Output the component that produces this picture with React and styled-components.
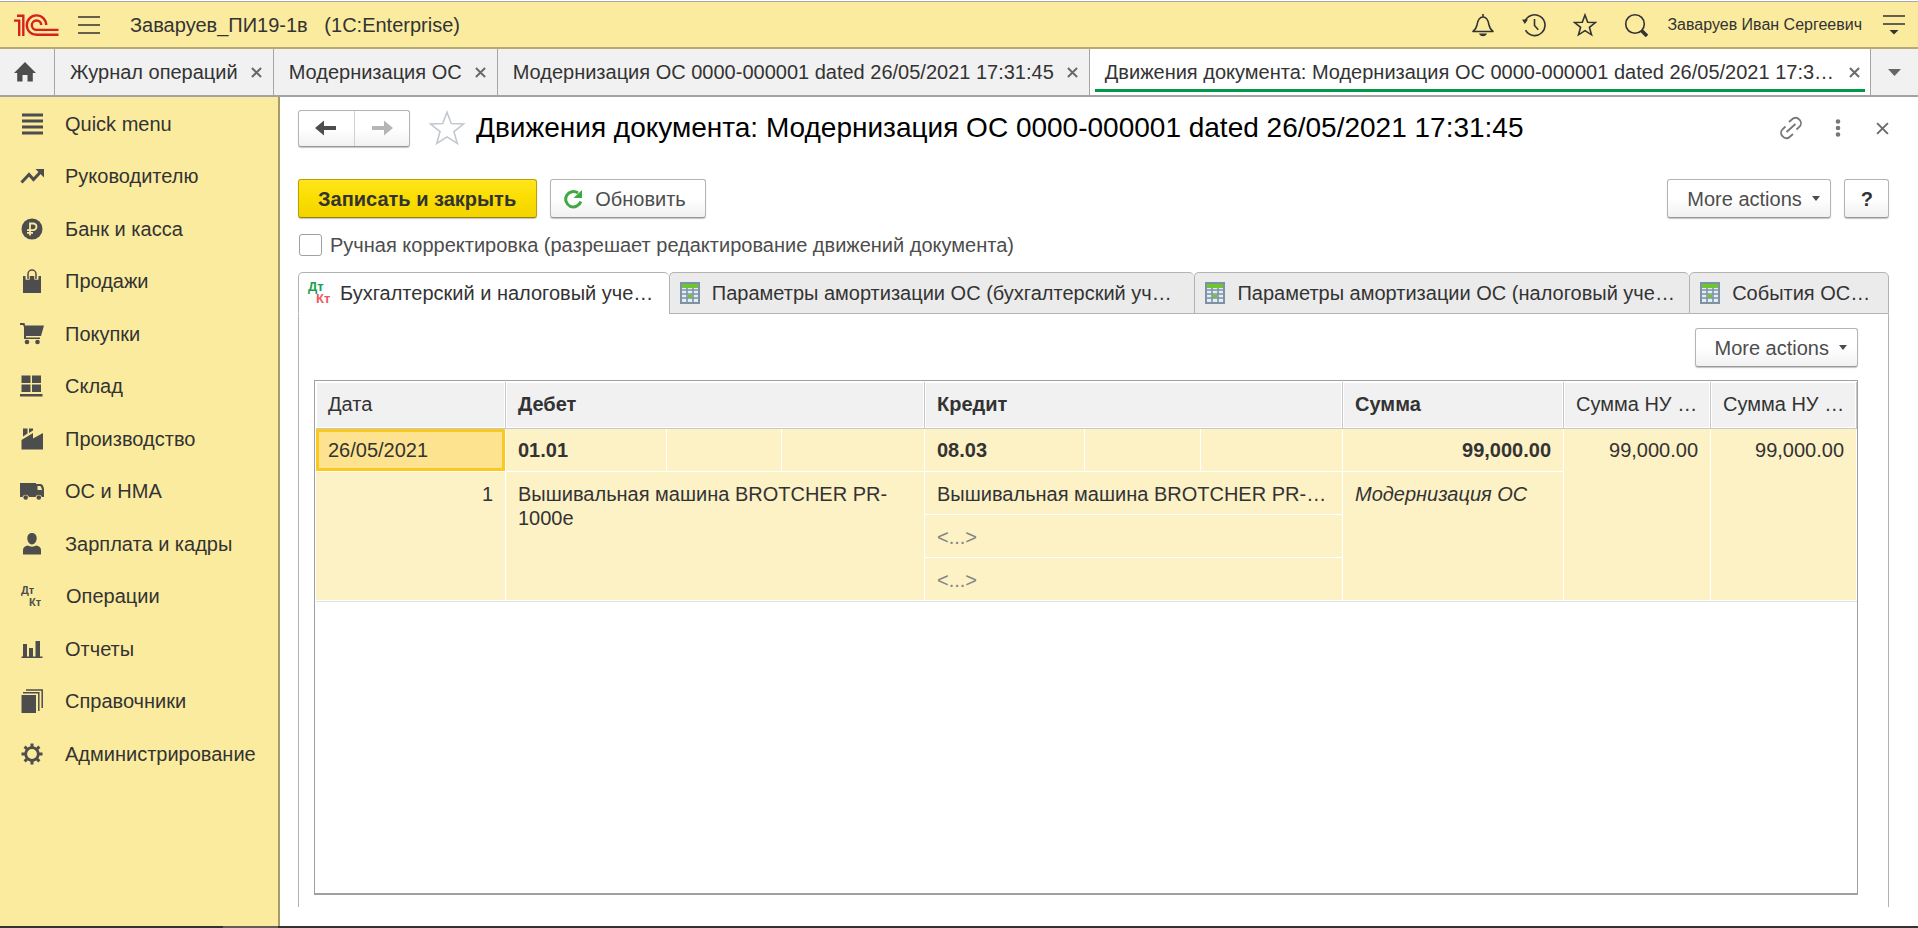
import React from "react";
import styled, { createGlobalStyle, css } from "styled-components";

const GlobalStyle = createGlobalStyle`
  *, *::before, *::after { box-sizing: border-box; }
  body {
    margin: 0;
    background: #ffffff;
    color: #333333;
    font: 20px/24px "Liberation Sans", Arial, sans-serif;
  }
  button, input { font: inherit; color: inherit; }
  svg { display: block; flex: none; }
`;

const Page = styled.div`
  min-height: 100vh;
  display: flex;
  flex-direction: column;
`;

/* ---------- title bar ---------- */

const TitleBar = styled.header`
  flex: none;
  height: 48px;
  margin-top: 1px;
  padding: 0 0 0 14px;
  display: flex;
  align-items: center;
  background: #faeb9e;
  border-top: 1px solid #a8a8a8;
  border-bottom: 2px solid #b5aa72;
`;

const PlainButton = styled.button`
  flex: none;
  display: flex;
  align-items: center;
  justify-content: center;
  width: ${(p) => p.$w}px;
  height: ${(p) => p.$h || 40}px;
  padding: 0;
  border: 0;
  background: none;
  cursor: pointer;
`;

const AppTitle = styled.h1`
  flex: 1;
  min-width: 0;
  margin: 0 0 0 11px;
  font-size: 20px;
  font-weight: 400;
  line-height: 24px;
  white-space: pre;
  overflow: hidden;
`;

const TitleTools = styled.div`
  display: flex;
  align-items: center;
  gap: 11px;
`;

const UserLink = styled.a`
  margin: 0 8px 0 11px;
  font-size: 16px;
  line-height: 24px;
  color: #333333;
  text-decoration: none;
  white-space: nowrap;
`;

/* ---------- window tabs ---------- */

const WindowTabs = styled.nav`
  flex: none;
  display: flex;
  height: 48px;
  background: #f1f1f1;
  border-bottom: 2px solid #a3a3a3;
`;

const HomeTab = styled.button`
  flex: none;
  width: 55px;
  display: flex;
  align-items: center;
  justify-content: center;
  padding: 0 4px 0 0;
  border: 0;
  border-right: 1px solid #a6a6a6;
  background: none;
`;

const WindowTab = styled.div`
  position: relative;
  flex: ${(p) => (p.$active ? "1 1 0" : "none")};
  min-width: 0;
  display: flex;
  align-items: center;
  padding: 0 6px 0 15px;
  border-right: 1px solid #a6a6a6;
  background: ${(p) => (p.$active ? "#ffffff" : "none")};
  ${(p) =>
    p.$active &&
    css`
      &::after {
        content: "";
        position: absolute;
        left: 5px;
        right: 5px;
        bottom: 3px;
        height: 3px;
        background: #009a46;
      }
    `}
`;

const WindowTabLink = styled.a`
  flex: 1;
  min-width: 0;
  white-space: nowrap;
  color: #333333;
  text-decoration: none;
`;

const TabClose = styled(PlainButton)`
  margin-left: 9px;
`;

const TabsMenu = styled(PlainButton)`
  height: 46px;
`;

/* ---------- body ---------- */

const Body = styled.div`
  flex: 1;
  display: flex;
  min-height: 0;
`;

const Sidebar = styled.nav`
  flex: none;
  width: 280px;
  background: #fbeb9e;
  border-right: 2px solid #a79c66;
`;

const Menu = styled.ul`
  margin: 0;
  padding: 0;
  list-style: none;
`;

const MenuItem = styled.li`
  height: 53px;
  &:nth-child(even) { height: 52px; }
`;

const MenuLink = styled.a`
  height: 100%;
  display: flex;
  align-items: center;
  gap: 21px;
  padding-left: 20px;
  color: #333333;
  text-decoration: none;
  white-space: nowrap;
`;

const Main = styled.main`
  flex: 1;
  min-width: 0;
  display: flex;
  flex-direction: column;
  padding: 12px 29px 19px 18px;
`;

const FormHeader = styled.div`
  flex: none;
  display: flex;
  align-items: center;
  height: 38px;
`;

const FormTools = styled.div`
  display: flex;
  align-items: center;
  gap: 28px;
`;

const raised = css`
  border: 1px solid #b4b4b4;
  border-bottom-color: #989898;
  border-radius: 3px;
  background: linear-gradient(#ffffff 50%, #f1f1f1);
  box-shadow: 0 1px 1px #c4c4c4;
`;

const NavButtons = styled.div`
  ${raised}
  display: flex;
  width: 112px;
  height: 37px;
`;

const NavButton = styled.button`
  flex: 1;
  display: flex;
  align-items: center;
  justify-content: center;
  padding: 0;
  border: 0;
  background: none;
  & + & { border-left: 1px solid #d0d0d0; }
`;

const StarButton = styled(PlainButton)`
  margin-left: 18px;
`;

const FormTitle = styled.h2`
  flex: 1;
  min-width: 0;
  margin: 0 0 0 10px;
  font-size: 28px;
  font-weight: 400;
  line-height: 36px;
  color: #000000;
  white-space: nowrap;
  overflow: hidden;
`;

const Toolbar = styled.div`
  flex: none;
  display: flex;
  gap: 13px;
  margin-top: ${(p) => p.$top}px;
  justify-content: ${(p) => (p.$end ? "flex-end" : "flex-start")};
`;

const Spacer = styled.div`
  flex: 1;
`;

const Button = styled.button`
  ${raised}
  height: 39px;
  display: flex;
  align-items: center;
  padding: 0 ${(p) => p.$pr}px 0 ${(p) => p.$pl}px;
  gap: ${(p) => p.$gap || 0}px;
  color: #4d4d4d;
  white-space: nowrap;
  cursor: pointer;
  ${(p) =>
    p.$primary &&
    css`
      border-color: #b8a100;
      border-bottom-color: #958400;
      background: linear-gradient(#ffe61c, #fbdd00 50%, #f3d400);
      color: #333333;
      font-weight: 700;
    `}
  ${(p) => p.$bold && css`font-weight: 700; color: #333333;`}
`;

const CheckRow = styled.label`
  flex: none;
  align-self: flex-start;
  display: flex;
  align-items: center;
  gap: 8px;
  height: 24px;
  margin: 15px 0 0 1px;
  color: #4d4d4d;
`;

const CheckBox = styled.input`
  appearance: none;
  width: 23px;
  height: 22px;
  margin: 0;
  border: 1px solid #a0a0a0;
  border-radius: 3px;
  background: #ffffff;
`;

/* ---------- form tabs ---------- */

const FormTabs = styled.div`
  flex: none;
  display: grid;
  grid-template-columns: 371fr 526fr 495fr 200fr;
  height: 42px;
  margin-top: 15px;
`;

const FormTab = styled.button`
  min-width: 0;
  display: flex;
  align-items: center;
  gap: 8px;
  padding: 0 10px 0 8px;
  border: 1px solid #b3b3b3;
  border-right-width: 0;
  border-radius: 5px 5px 0 0;
  background: #ebebeb;
  text-align: left;
  &:last-child { border-right-width: 1px; }
  & + & { padding-left: 10px; gap: 12px; }
  ${(p) =>
    p.$active &&
    css`
      background: #ffffff;
      border-bottom-color: transparent;
    `}
`;

const FormTabText = styled.span`
  min-width: 0;
  overflow: hidden;
  white-space: nowrap;
`;

const Panel = styled.section`
  flex: 1;
  display: flex;
  flex-direction: column;
  padding: 14px 30px 12px 15px;
  border: 1px solid #b3b3b3;
  border-width: 0 1px;
`;

/* ---------- postings table ---------- */

const TableBox = styled.div`
  flex: 1;
  margin-top: 13px;
  padding: 1px 2px 24px 1px;
  border: 1px solid #a0a0a0;
  border-bottom-width: 2px;
`;

const Table = styled.table`
  width: 100%;
  table-layout: fixed;
  border-collapse: separate;
  border-spacing: 0;
  border-bottom: 1px solid #e2e2e2;
  tbody tr + tr td { padding-top: 10px; padding-bottom: 8px; }
`;

const Th = styled.th`
  height: 47px;
  padding: 0 8px 2px 12px;
  border-right: 1px solid #c8c8c8;
  border-bottom: 1px solid #c8c8c8;
  background: #f1f1f1;
  box-shadow: inset 0 0 0 1px #ffffff;
  font-weight: ${(p) => (p.$bold ? 700 : 400)};
  text-align: left;
  white-space: nowrap;
  overflow: hidden;
`;

const Td = styled.td`
  height: 43px;
  padding: 9px 12px;
  border-right: 1px solid #ffffff;
  border-bottom: 1px solid #ffffff;
  background: #fdf1c6;
  vertical-align: top;
  overflow: hidden;
  text-align: ${(p) => (p.$right ? "right" : "left")};
  white-space: ${(p) => (p.$wrap ? "normal" : "nowrap")};
  font-weight: ${(p) => (p.$bold ? 700 : 400)};
  font-style: ${(p) => (p.$italic ? "italic" : "normal")};
  color: ${(p) => (p.$muted ? "#858585" : "#333333")};
  ${(p) =>
    p.$selected &&
    css`
      background: #fde38f;
      box-shadow: inset 0 0 0 3px #fbc91e;
    `}
`;

const BottomEdge = styled.footer`
  flex: none;
  height: 2px;
  background: linear-gradient(#655c55, #655c55) 223px 0 / 55px 2px no-repeat #35332f;
`;

/* ---------- icons ---------- */

const ink = "#4d4d4d";

const Svg = ({ w = 24, h = 24, children, ...rest }) => (
  <svg width={w} height={h} viewBox={`0 0 ${w} ${h}`} fill="none" aria-hidden="true" {...rest}>
    {children}
  </svg>
);

const Logo = () => (
  <Svg w={45} h={24} stroke="#d8211f" strokeWidth="2.4">
    <path d="M3 2.7h6.3V23M0 7.6h5.2V23" />
    <path d="M32.2 12A9.7 9.7 0 1 0 22.6 21.8H44.5" />
    <path d="M27.2 12a4.7 4.7 0 1 0-4.6 4.9H44.5" />
  </Svg>
);

const Burger = () => (
  <Svg w={22} h={18} stroke="#333" strokeWidth="1.6">
    <path d="M0 1h22M0 9h22M0 17h22" />
  </Svg>
);

const Bell = () => (
  <Svg stroke="#333" strokeWidth="1.6" strokeLinejoin="round">
    <path d="M12 1v2.5M2 18.5h20c-2.500-1.800-3.400-3.300-4-6.500-.800-5-2.400-8-6-8s-5.200 3-6 8c-.600 3.200-1.500 4.700-4 6.500z" />
    <path d="M8 20.500h8c-.500 1.600-2 2.800-4 2.800s-3.500-1.200-4-2.800z" fill="#333" stroke="none" />
  </Svg>
);

const History = () => (
  <Svg stroke="#333" strokeWidth="1.600">
    <path d="M2.700 9A10.400 10.400 0 1 1 3.500 17.200M12.500 6v6.500l3.800 4.300" />
    <path d="M0 6.500h6L2.800 11z" fill="#333" stroke="none" />
  </Svg>
);

const Star = ({ size = 24, stroke = "#333", width = 1.6 }) => (
  <svg width={size} height={size} viewBox="0 0 24 24" fill="none" stroke={stroke} strokeWidth={width} aria-hidden="true">
    <path d="M12 2l2.700 7.200 7.700.300-6 4.800 2.100 7.500-6.500-4.200-6.500 4.200 2.100-7.500-6-4.800 7.700-.300z" />
  </svg>
);

const Search = () => (
  <Svg stroke="#333" strokeWidth="1.600">
    <circle cx="11" cy="11" r="9.300" />
    <path d="M17.500 17.500l5.500 5.500" strokeWidth="3.600" />
  </Svg>
);

const ServiceMenu = () => (
  <Svg w={22} h={20} stroke="#333" strokeWidth="1.600">
    <path d="M0 1h22M0 9h22" />
    <path d="M6.500 15h9L11 19.500z" fill="#333" stroke="none" />
  </Svg>
);

const House = () => (
  <Svg w={22} h={20} fill={ink}>
    <path d="M11 0L0 11h3.200v8.500h5.300V13h5v6.500h5.300V11H22z" fill={ink} />
  </Svg>
);

const Cross = ({ size = 12, color = "#6b6b6b", width = 2.2 }) => (
  <svg width={size} height={size} viewBox="0 0 12 12" stroke={color} strokeWidth={width} aria-hidden="true">
    <path d="M1 1l10 10M11 1L1 11" />
  </svg>
);

const Caret = ({ w = 8, h = 5, color = "#4d4d4d" }) => (
  <svg width={w} height={h} viewBox="0 0 8 5" preserveAspectRatio="none" aria-hidden="true">
    <path d="M0 0h8L4 5z" fill={color} />
  </svg>
);

const Arrow = ({ color, flip }) => (
  <Svg w={22} h={16}>
    <path
      d={flip ? "M22 8L13 .500v5.600H1v3.800h12v5.600z" : "M0 8l9-7.500v5.600h12v3.800H9v5.600z"}
      fill={color}
    />
  </Svg>
);

const LinkIcon = () => (
  <Svg stroke="#777" strokeWidth="1.800">
    <path d="M10 6l3.400-3a4.600 4.600 0 0 1 6.600.300l.800.900a4.600 4.600 0 0 1-.300 6.400L17.500 13.500" />
    <path d="M14 18l-3.400 3a4.600 4.600 0 0 1-6.600-.300l-.800-.900a4.600 4.600 0 0 1 .300-6.400L6.500 10.500M7.500 16l9-8" />
  </Svg>
);

const Dots = () => (
  <Svg w={6} h={18}>
    <circle cx="3" cy="2.500" r="2.300" fill="#777" />
    <circle cx="3" cy="9" r="2.300" fill="#777" />
    <circle cx="3" cy="15.500" r="2.300" fill="#777" />
  </Svg>
);

const Refresh = () => (
  <Svg w={20} h={20}>
    <path d="M17.800 12.500A7.700 7.700 0 1 1 15 4" stroke="#3fa845" strokeWidth="3" />
    <path d="M19 1v8h-8.500z" fill="#3fa845" />
  </Svg>
);

const DtKt = ({ top = ink, bottom = ink, size = 11 }) => (
  <Svg w={25} fontFamily="Liberation Sans, Arial, sans-serif" fontWeight="700" fontSize={size}>
    <text x="1" y="10" fill={top}>Дт</text>
    <text x="9" y="22" fill={bottom}>Кт</text>
  </Svg>
);

const Register = () => (
  <Svg w={20} h={22}>
    <rect x="1" y="1" width="18" height="20" fill="#e4edf3" stroke="#7d93a4" strokeWidth="2" />
    <path d="M2 8h16M2 12h16M2 16h16M7 2v18M13 2v18" stroke="#7d93a4" strokeWidth="1.600" />
    <rect x="2" y="2" width="16" height="4" fill="#6ec531" />
    <rect x="8" y="13" width="4" height="3" fill="#6ec531" />
  </Svg>
);

const QuickIcon = () => (
  <Svg stroke={ink} strokeWidth="3"><path d="M2 3h21M2 9h21M2 15h21M2 21h21" /></Svg>
);
const TrendIcon = () => (
  <Svg>
    <path d="M1.500 18.500L9 10.500l4.500 5L21 7.500" stroke={ink} strokeWidth="3" />
    <path d="M15.500 5H24v8.500z" fill={ink} />
  </Svg>
);
const RubleIcon = () => (
  <Svg>
    <circle cx="12" cy="12" r="10.500" fill={ink} />
    <path d="M10 18.500V6.500h3.200a3.300 3.300 0 0 1 0 6.600H7M7 15.800h6" stroke="#fbeb9e" strokeWidth="1.800" />
  </Svg>
);
const BagIcon = () => (
  <Svg>
    <path d="M3 7h2.500v3.500h3V7h7v3.500h3V7H21v17H3z" fill={ink} />
    <path d="M8 10.500V5.500a3.500 3.500 0 0 1 8 0v5" stroke="#fbeb9e" strokeWidth="3.500" />
    <path d="M8 10V5a4 4 0 0 1 8 0v5" stroke={ink} strokeWidth="1.500" />
  </Svg>
);
const CartIcon = () => (
  <Svg>
    <path d="M0 1h4.500l.600 2.500H24L21 14H6v1.500h14V17H4V5L3 3H0z" fill={ink} />
    <circle cx="7" cy="20" r="2.300" fill={ink} />
    <circle cx="17.500" cy="20" r="2.300" fill={ink} />
  </Svg>
);
const StockIcon = () => (
  <Svg>
    <path d="M1.500 1.500h9v7.500h-9zM12 1.500h9v7.500h-9zM1.500 10.500h9V18h-9zM12 10.500h9V18h-9zM0 20h22.500v2.500H0z" fill={ink} />
  </Svg>
);
const FactoryIcon = () => (
  <Svg>
    <path d="M1.500 22.500V13L13 6v5.500L23 6v16.500z" fill={ink} />
    <path d="M3 1.500h4.500v5L3 9.500zM9 1.500h4v2L9 6z" fill={ink} />
  </Svg>
);
const TruckIcon = () => (
  <Svg>
    <path d="M0 4h16v1h4.500c2 0 3.500 3 3.500 5.500V18h-2a3.500 3.500 0 0 0-6.500 0H9a3.500 3.500 0 0 0-6.500 0H0zM17.500 7v4H22c-.300-2-1.200-4-2.200-4z" fill={ink} fillRule="evenodd" />
    <circle cx="5.700" cy="18.500" r="2.300" fill={ink} />
    <circle cx="18.800" cy="18.500" r="2.300" fill={ink} />
  </Svg>
);
const PersonIcon = () => (
  <Svg>
    <path d="M12 1c3 0 4.700 2 4.700 5 0 3.500-2 6.500-4.700 6.500S7.300 9.500 7.300 6C7.300 3 9 1 12 1zM3 22.500V18c0-2.500 2-4 5-4.500 2 1.500 6 1.500 8 0 3 .500 5 2 5 4.500v4.500z" fill={ink} />
  </Svg>
);
const ChartIcon = () => (
  <Svg>
    <path d="M1.500 19.500h21V21h-21zM3 7h4v13H3zM9 11h4v9H9zM15.500 4H20v16h-4.500z" fill={ink} />
  </Svg>
);
const BooksIcon = () => (
  <Svg>
    <path d="M1.500 6H16v18H1.500z" fill={ink} />
    <path d="M3 3.800h15.800V22M6 .900h16.200V19" stroke={ink} strokeWidth="1.500" />
  </Svg>
);
const GearIcon = () => (
  <Svg stroke={ink}>
    <circle cx="12" cy="12" r="6.300" strokeWidth="2.800" />
    <path d="M12 1.500V5M12 19v3.500M1.500 12H5M19 12h3.500M4.600 4.600L7 7M17 17l2.400 2.400M4.600 19.400L7 17M17 7l2.400-2.400" strokeWidth="3" />
  </Svg>
);

/* ---------- data ---------- */

const menu = [
  ["Quick menu", QuickIcon],
  ["Руководителю", TrendIcon],
  ["Банк и касса", RubleIcon],
  ["Продажи", BagIcon],
  ["Покупки", CartIcon],
  ["Склад", StockIcon],
  ["Производство", FactoryIcon],
  ["ОС и НМА", TruckIcon],
  ["Зарплата и кадры", PersonIcon],
  ["Операции", DtKt],
  ["Отчеты", ChartIcon],
  ["Справочники", BooksIcon],
  ["Администрирование", GearIcon],
];

const windows = [
  { text: "Журнал операций" },
  { text: "Модернизация ОС" },
  { text: "Модернизация ОС 0000-000001 dated 26/05/2021 17:31:45" },
  { text: "Движения документа: Модернизация ОС 0000-000001 dated 26/05/2021 17:3…", active: true },
];

const formTabs = [
  { text: "Бухгалтерский и налоговый уче…", active: true },
  { text: "Параметры амортизации ОС (бухгалтерский уч…" },
  { text: "Параметры амортизации ОС (налоговый уче…" },
  { text: "События ОС…" },
];

const columns = [190, 161, 115, 143, 160, 116, 142, 221, 147, 146];

const MoreActions = () => (
  <Button type="button" $pl={19} $pr={10} $gap={10}>
    More actions
    <Caret />
  </Button>
);

export default function App() {
  return (
    <Page>
      <GlobalStyle />
      <TitleBar>
        <Logo />
        <PlainButton type="button" $w={60} aria-label="Main menu"><Burger /></PlainButton>
        <AppTitle>{"Заваруев_ПИ19-1в   (1C:Enterprise)"}</AppTitle>
        <TitleTools>
          <PlainButton type="button" $w={40} aria-label="Notifications"><Bell /></PlainButton>
          <PlainButton type="button" $w={40} aria-label="History"><History /></PlainButton>
          <PlainButton type="button" $w={40} aria-label="Favorites"><Star /></PlainButton>
          <PlainButton type="button" $w={40} aria-label="Search"><Search /></PlainButton>
        </TitleTools>
        <UserLink href="#user">Заваруев Иван Сергеевич</UserLink>
        <PlainButton type="button" $w={48} aria-label="Service and settings"><ServiceMenu /></PlainButton>
      </TitleBar>

      <WindowTabs>
        <HomeTab type="button" aria-label="Home"><House /></HomeTab>
        {windows.map((w) => (
          <WindowTab key={w.text} $active={w.active}>
            <WindowTabLink href="#window">{w.text}</WindowTabLink>
            <TabClose type="button" $w={20} $h={24} aria-label="Close tab"><Cross size={11} /></TabClose>
          </WindowTab>
        ))}
        <TabsMenu type="button" $w={47} aria-label="All windows"><Caret w={13} h={7} color="#666" /></TabsMenu>
      </WindowTabs>

      <Body>
        <Sidebar>
          <Menu>
            {menu.map(([text, Icon]) => (
              <MenuItem key={text}>
                <MenuLink href="#section"><Icon />{text}</MenuLink>
              </MenuItem>
            ))}
          </Menu>
        </Sidebar>

        <Main>
          <FormHeader>
            <NavButtons>
              <NavButton type="button" aria-label="Back"><Arrow color={ink} /></NavButton>
              <NavButton type="button" aria-label="Forward"><Arrow color="#b5b5b5" flip /></NavButton>
            </NavButtons>
            <StarButton type="button" $w={38} $h={38} aria-label="Add to favorites">
              <Star size={38} stroke="#c3c8ce" width={1} />
            </StarButton>
            <FormTitle>Движения документа: Модернизация ОС 0000-000001 dated 26/05/2021 17:31:45</FormTitle>
            <FormTools>
              <PlainButton type="button" $w={20} aria-label="Copy link"><LinkIcon /></PlainButton>
              <PlainButton type="button" $w={18} aria-label="More"><Dots /></PlainButton>
              <PlainButton type="button" $w={14} aria-label="Close"><Cross size={13} width={1.8} /></PlainButton>
            </FormTools>
          </FormHeader>

          <Toolbar $top={32}>
            <Button type="button" $primary $pl={19} $pr={20}>Записать и закрыть</Button>
            <Button type="button" $pl={12} $pr={19} $gap={12}><Refresh />Обновить</Button>
            <Spacer />
            <MoreActions />
            <Button type="button" $bold $pl={16} $pr={15} aria-label="Help">?</Button>
          </Toolbar>

          <CheckRow>
            <CheckBox type="checkbox" />
            Ручная корректировка (разрешает редактирование движений документа)
          </CheckRow>

          <FormTabs role="tablist">
            {formTabs.map((t) => (
              <FormTab key={t.text} type="button" role="tab" aria-selected={!!t.active} $active={t.active}>
                {t.active ? <DtKt top="#1d9e54" bottom="#ea5a5a" size={13} /> : <Register />}
                <FormTabText>{t.text}</FormTabText>
              </FormTab>
            ))}
          </FormTabs>

          <Panel>
            <Toolbar $top={0} $end><MoreActions /></Toolbar>
            <TableBox>
              <Table>
                <colgroup>
                  {columns.map((w, i) => <col key={i} width={w} />)}
                </colgroup>
                <thead>
                  <tr>
                    <Th>Дата</Th>
                    <Th colSpan={3} $bold>Дебет</Th>
                    <Th colSpan={3} $bold>Кредит</Th>
                    <Th $bold>Сумма</Th>
                    <Th>Сумма НУ …</Th>
                    <Th>Сумма НУ …</Th>
                  </tr>
                </thead>
                <tbody>
                  <tr>
                    <Td $selected>26/05/2021</Td>
                    <Td $bold>01.01</Td>
                    <Td />
                    <Td />
                    <Td $bold>08.03</Td>
                    <Td />
                    <Td />
                    <Td $bold $right>99,000.00</Td>
                    <Td rowSpan={4} $right>99,000.00</Td>
                    <Td rowSpan={4} $right>99,000.00</Td>
                  </tr>
                  <tr>
                    <Td rowSpan={3} $right>1</Td>
                    <Td rowSpan={3} colSpan={3} $wrap>Вышивальная машина BROTCHER PR-1000e</Td>
                    <Td colSpan={3}>Вышивальная машина BROTCHER PR-…</Td>
                    <Td rowSpan={3} $italic>Модернизация ОС</Td>
                  </tr>
                  <tr><Td colSpan={3} $muted>{"<...>"}</Td></tr>
                  <tr><Td colSpan={3} $muted>{"<...>"}</Td></tr>
                </tbody>
              </Table>
            </TableBox>
          </Panel>
        </Main>
      </Body>
      <BottomEdge />
    </Page>
  );
}
